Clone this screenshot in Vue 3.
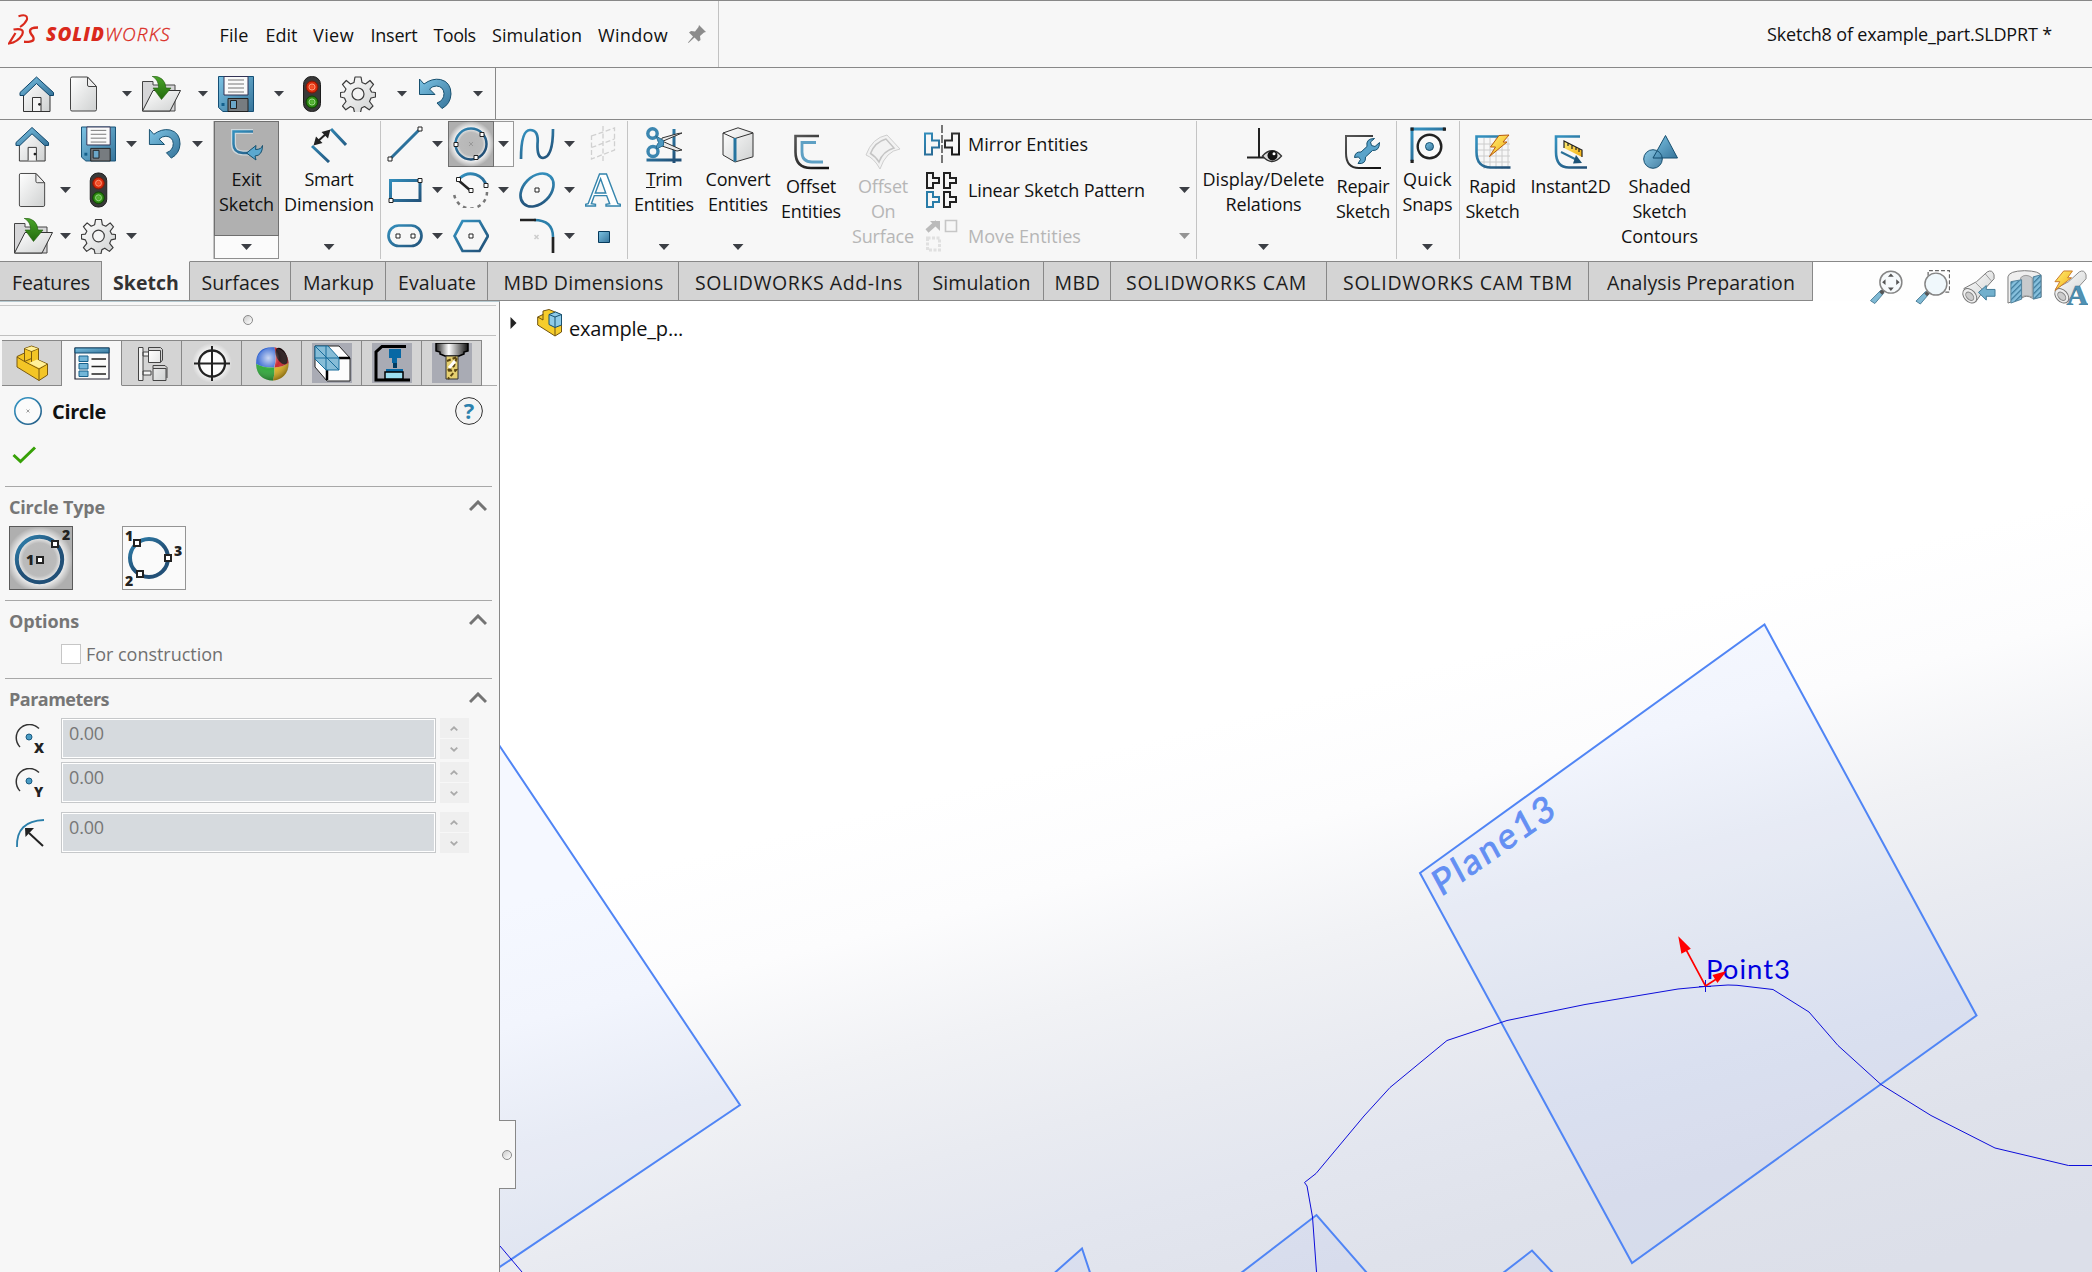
<script setup>
// Tightens or loosens tracking so that a label occupies its design width.
const vFit = {
  mounted(el, { value }) {
    if (!value) return
    const width = el.getBoundingClientRect().width
    el.style.letterSpacing = `${(value - width) / el.textContent.length}px`
  },
}

const menus = [
  ['File', 29, 219.5], ['Edit', 32, 265.5], ['View', 41, 313], ['Insert', 47, 370.5],
  ['Tools', 42, 433.5], ['Simulation', 90, 492], ['Window', 70, 598],
].map(([label, width, x], i, all) => ({
  label, width, gap: i < all.length - 1 ? all[i + 1][2] - x : width,
}))

const quickBar = [
  { icon: 'home', w: 36 }, { icon: 'doc', w: 36 }, { caret: true },
  { icon: 'open', w: 40 }, { caret: true }, { icon: 'save', w: 36 },
  { caret: true }, { icon: 'light', w: 36 }, { icon: 'gear', w: 36 },
  { caret: true }, { icon: 'undo', w: 36 }, { caret: true },
]

const fileGrid = [
  'home', '', 'save', 'v', 'undo', 'v',
  'doc', 'v', 'light', '', '', '',
  'open', 'v', 'gear', 'v', '', '',
]
const sketchGrid = [
  'line', 'v', 'circle', 'v', 'spline', 'v', 'planes',
  'rect', 'v', 'arc', 'v', 'ellipse', 'v', 'text',
  'slot', 'v', 'polygon', '', 'fillet', 'v', 'point',
]

const entityTools = [
  { icon: 'trim', w: 73, lines: [['Trim', 36], ['Entities', 60]], caret: true },
  { icon: 'convert', w: 75, lines: [['Convert', 65], ['Entities', 60]], caret: true },
  { icon: 'offset', w: 71, lines: [['Offset', 50], ['Entities', 60]], low: true },
  { icon: 'surface', w: 73, lines: [['Offset', 50], ['On', 24], ['Surface', 62]], low: true, off: true },
]
const patternTools = [
  { icon: 'mirror', label: 'Mirror Entities', width: 120 },
  { icon: 'pattern', label: 'Linear Sketch Pattern', width: 177, caret: true },
  { icon: 'move', label: 'Move Entities', width: 113, caret: true, off: true },
]
const relationTools = [
  { icon: 'relations', w: 134, lines: [['Display/Delete', 122], ['Relations', 76]], caret: true },
  { icon: 'repair', w: 65, lines: [['Repair', 53], ['Sketch', 54]], low: true },
]
const snapTools = [{ icon: 'snaps', w: 62, lines: [['Quick', 49], ['Snaps', 50]], caret: true }]
const rapidTools = [
  { icon: 'rapid', w: 66, lines: [['Rapid', 47], ['Sketch', 54]], low: true },
  { icon: 'instant', w: 90, lines: [['Instant2D', 80]], low: true },
  { icon: 'shaded', w: 88, lines: [['Shaded', 62], ['Sketch', 54], ['Contours', 77]], low: true },
]
const groups = [entityTools, relationTools, snapTools, rapidTools]

const tabs = [
  ['Features', 102, 78], ['Sketch', 88, 66], ['Surfaces', 101, 78], ['Markup', 95, 71],
  ['Evaluate', 102, 78], ['MBD Dimensions', 191, 160], ['SOLIDWORKS Add-Ins', 240, 208],
  ['Simulation', 125, 98], ['MBD', 67, 46], ['SOLIDWORKS CAM', 216, 181],
  ['SOLIDWORKS CAM TBM', 262, 230], ['Analysis Preparation', 224, 188],
]
const viewTools = ['zoomfit', 'zoomarea', 'prevview', 'section', 'dynview']
const managerTabs = ['feature', 'property', 'config', 'target', 'appearance', 'camfeat', 'cammach', 'camtool']
const params = [{ icon: 'px', axis: 'X' }, { icon: 'py', axis: 'Y' }, { icon: 'pr' }]
</script>

<template>
  <div class="app">
    <svg class="defs" width="0" height="0">
      <defs>
        <linearGradient id="gb" gradientUnits="userSpaceOnUse" x1="6" y1="4" x2="30" y2="34">
          <stop offset="0" stop-color="#338fbd" /><stop offset="1" stop-color="#225077" />
        </linearGradient>
        <linearGradient id="gf" x1="0" y1="0" x2="1" y2="1">
          <stop offset="0" stop-color="#7cc3e4" /><stop offset="1" stop-color="#36749a" />
        </linearGradient>
        <linearGradient id="gk" gradientUnits="userSpaceOnUse" x1="4" y1="2" x2="30" y2="34">
          <stop offset="0" stop-color="#555" /><stop offset="1" stop-color="#151515" />
        </linearGradient>
        <linearGradient id="gw" x1="0" y1="0" x2="1" y2="1">
          <stop offset="0" stop-color="#fff" /><stop offset="1" stop-color="#cfd1d1" />
        </linearGradient>
        <linearGradient id="gg" x1="0" y1="0" x2="0" y2="1">
          <stop offset="0" stop-color="#4aa52a" /><stop offset="1" stop-color="#226a0b" />
        </linearGradient>
        <linearGradient id="gy" x1="0" y1="0" x2="1" y2="1">
          <stop offset="0" stop-color="#ffee77" /><stop offset="1" stop-color="#f2ae10" />
        </linearGradient>
        <linearGradient id="gt" x1="0" y1="0" x2="1" y2="0">
          <stop offset="0" stop-color="#222" /><stop offset=".4" stop-color="#fff" /><stop offset="1" stop-color="#111" />
        </linearGradient>
        <radialGradient id="gr"><stop offset="0" stop-color="#ff5a30" /><stop offset="1" stop-color="#c91b00" /></radialGradient>
        <radialGradient id="gn"><stop offset="0" stop-color="#5fc03c" /><stop offset="1" stop-color="#1d7405" /></radialGradient>
        <radialGradient id="ball" cx=".38" cy=".32" r=".75"><stop offset="0" stop-color="#fff" stop-opacity=".75" /><stop offset=".45" stop-color="#fff" stop-opacity=".1" /><stop offset="1" stop-color="#000" stop-opacity=".45" /></radialGradient>
        <radialGradient id="glow"><stop offset="0" stop-color="#fff" stop-opacity=".1" /><stop offset=".5" stop-color="#fff" stop-opacity=".15" /><stop offset=".7" stop-color="#fff" stop-opacity=".9" /><stop offset="1" stop-color="#fff" stop-opacity="0" /></radialGradient>
        <radialGradient id="halo"><stop offset="0" stop-color="#fff" /><stop offset=".6" stop-color="#fff" stop-opacity=".9" /><stop offset="1" stop-color="#fff" stop-opacity="0" /></radialGradient>
        <pattern id="hatch" width="4" height="4" patternUnits="userSpaceOnUse" patternTransform="rotate(-45)">
          <rect width="4" height="4" fill="#86c0dd" /><rect width="4" height="1.3" fill="#3a789a" />
        </pattern>
      </defs>

      <symbol id="i-home" viewBox="0 0 36 36">
        <path d="M4.5 17 17.5 4 31 17v18.5H4.500z" fill="url(#gw)" stroke="#333" />
        <path d="M13.5 35V21.5h8.500V35" fill="#f4f4f4" stroke="#333" /><circle cx="20.500" cy="28.300" r="1.400" fill="#222" />
        <path d="M1 16.500 17.500 1 34.500 16.500v3h-4L17.500 7.500 5 19.500H1z" fill="url(#gf)" stroke="#0e4469" />
      </symbol>
      <symbol id="i-doc" viewBox="0 0 36 36">
        <path d="M4.500 2.500q0-1.500 1.500-1.500h15.500l9 9.500v23q0 1.500-1.500 1.500H6q-1.500 0-1.500-1.500z" fill="url(#gw)" stroke="#444" />
        <path d="M21.500 1v8q0 1.500 1.500 1.500h7.500z" fill="#eee" stroke="#444" />
      </symbol>
      <symbol id="i-open" viewBox="0 0 40 36">
        <path d="M1.500 35V5.500H12v3.500h22v26z" fill="#d6d6d8" stroke="#444" />
        <path d="M1.500 35 12 14.500h27.500L29 35z" fill="url(#gw)" stroke="#333" />
        <path d="M11 0q13 0 14 12h5L20.500 23.500 12 12h5.500Q18 4 11 0z" fill="url(#gg)" stroke="#245c10" stroke-width=".6" />
      </symbol>
      <symbol id="i-save" viewBox="0 0 36 36">
        <path d="M.5.500h35v35H5l-4.500-4z" fill="url(#gf)" stroke="#154f75" />
        <path d="M6 .5h24V19H6z" fill="#fafafa" stroke="#335" /><path d="M10 4h16M10 8h16M10 12h16M10 16h16" stroke="#777" />
        <path d="M10 22.500h20v13H10z" fill="#777c80" stroke="#222" /><path d="M12.500 24.500h6v8h-6z" fill="#6ba7c9" stroke="#222" />
        <path d="M3.500 27h3v3h-3z" fill="#14608c" />
      </symbol>
      <symbol id="i-light" viewBox="0 0 36 36">
        <rect x="9.500" y=".5" width="17" height="35" rx="8" fill="#393939" stroke="#1c1c1c" />
        <circle cx="18" cy="11" r="6" fill="url(#gr)" stroke="#7b1a08" /><circle cx="18" cy="26" r="6" fill="url(#gn)" stroke="#0d4403" />
        <circle cx="18" cy="11" r="3" fill="none" stroke="#ff9a7a" /><circle cx="18" cy="26" r="3" fill="none" stroke="#9ad888" />
      </symbol>
      <symbol id="i-gear" viewBox="0 0 36 36">
        <path d="M15 1h6l1 5.500 3.500 1.500 4.500-3.500 3.500 4-3.500 4.500 1.500 3 4 .5v4.500l-4.500 1-1.500 3.500 3.500 4.500-3.800 3.800-4.700-3.300-3 1.500-1 4.500h-6l-1-4.500-3-1.500-4.700 3.300L2.500 30l3.500-4.500-1.500-3.500L.5 21v-4.500l4-.5L6 13 2.500 8.500l3.800-4L10.500 8 14 6.500z" fill="url(#gw)" stroke="#3b3b3b" stroke-width="1.200" stroke-linejoin="round" />
        <circle cx="18" cy="18" r="6" fill="#f4f4f4" stroke="#3b3b3b" stroke-width="1.200" />
      </symbol>
      <symbol id="i-undo" viewBox="0 0 36 36">
        <path d="M2.500 3l4.500 5Q15 2 23.500 3.500 34 6 34 18q-.5 10-9 14.500l-5-5.500q7-2.500 7-9.500-.5-7-7.500-7.500-4 0-7 3l5.500 5.500H2.500z" fill="url(#gf)" stroke="#17506f" />
      </symbol>
      <symbol id="i-exit" viewBox="0 0 36 36">
        <path d="M24 4.500H4.500V17Q4.500 25.500 14 26h6" fill="none" stroke="#e4f2f8" stroke-width="5" opacity=".6" />
        <path d="M24 4.500H4.500V17Q4.500 25.500 14 26h5" fill="none" stroke="url(#gb)" stroke-width="2.500" />
        <path d="M17.500 26 27 18.500l-.5 4q6 0 7-4 0 10-7.500 10.500l1 4z" fill="#5ba8cf" stroke="#15506f" />
      </symbol>
      <symbol id="i-dim" viewBox="0 0 36 36">
        <path d="M20 2 35 18M1 19l17 16" stroke="url(#gb)" stroke-width="3" />
        <path d="M5 16 17 5" stroke="#222" stroke-width="2" /><path d="M2.500 18.500 5 9.500l6.500 6.500zM19.500 2.500l-9 2.500 6.500 6.500z" fill="#222" />
      </symbol>
      <symbol id="i-line" viewBox="0 0 36 36">
        <path d="M3 33 33 3" stroke="url(#gb)" stroke-width="3" /><path d="M1 31h4v4H1zM31 1h4v4h-4z" fill="#fff" stroke="#222" />
      </symbol>
      <symbol id="i-circle" viewBox="0 0 46 46">
        <circle cx="23" cy="23" r="23" fill="url(#glow)" />
        <circle cx="23" cy="23" r="15.500" fill="none" stroke="url(#gb)" stroke-width="2.500" />
        <path d="M32 11.500h4v4h-4zM6 21.500h4v4H6zM26 34.500h4v4h-4z" fill="#fff" stroke="#222" /><path d="m21 21 4 4m0-4-4 4" stroke="#999" />
      </symbol>
      <symbol id="i-spline" viewBox="0 0 36 36">
        <path d="M2 33Q2 4 11 4t7.500 14Q18 32 24 32 34 31 34 3" fill="none" stroke="url(#gb)" stroke-width="2.700" />
      </symbol>
      <symbol id="i-planes" viewBox="0 0 36 36">
        <path d="M6.500 10 29.500 2v22l-23 9zM6.500 21.500 29.500 13M18 0v35" fill="none" stroke="#d0d0d0" stroke-width="1.300" stroke-dasharray="5 2.500" />
      </symbol>
      <symbol id="i-rect" viewBox="0 0 36 36">
        <path d="M3.500 8.500h29.500v20H3.500z" fill="none" stroke="url(#gb)" stroke-width="3" /><path d="M31 6.500h4v4h-4zM2 26.500h4v4H2z" fill="#fff" stroke="#222" />
      </symbol>
      <symbol id="i-arc" viewBox="0 0 36 36">
        <path d="M7 6A16 16 0 0 1 33.500 15" fill="none" stroke="url(#gb)" stroke-width="3" />
        <path d="M34 20A16.500 16.500 0 0 1 1 20" fill="none" stroke="#777" stroke-width="2.500" stroke-dasharray="3.500 4" />
        <path d="M5 8 18 19" stroke="#222" stroke-width="2.500" /><path d="M3.500 5.500h4v4h-4zM16 16.500h4v4h-4zM31 11.500h4v4h-4z" fill="#fff" stroke="#222" />
      </symbol>
      <symbol id="i-ellipse" viewBox="0 0 36 36">
        <ellipse cx="18" cy="18" rx="13.500" ry="19" transform="rotate(45 18 18)" fill="none" stroke="url(#gb)" stroke-width="2.700" />
        <path d="M16 16h4v4h-4z" fill="#fff" stroke="#222" />
      </symbol>
      <symbol id="i-slot" viewBox="0 0 36 36">
        <rect x="1.500" y="7.500" width="33" height="20.500" rx="10.200" fill="none" stroke="url(#gb)" stroke-width="2.700" />
        <path d="M9 16h4v4H9zM24 16h4v4h-4z" fill="#fff" stroke="#222" />
      </symbol>
      <symbol id="i-polygon" viewBox="0 0 36 36">
        <path d="M9.500 3h17L35 18l-8.500 15h-17L1.500 18z" fill="none" stroke="url(#gb)" stroke-width="2.700" /><path d="M16 16h4v4h-4z" fill="#fff" stroke="#222" />
      </symbol>
      <symbol id="i-fillet" viewBox="0 0 36 36">
        <path d="M15 2Q34 2 34 19" fill="none" stroke="#2b7faa" stroke-width="2.500" /><path d="M1 2h16M34 19v16" stroke="#222" stroke-width="2.700" />
        <path d="m15.500 17 4 4m0-4-4 4" stroke="#ccc" stroke-width="1.500" />
      </symbol>
      <symbol id="i-point" viewBox="0 0 36 36"><path d="M13.500 13.500h11v11h-11z" fill="url(#gf)" stroke="#063a5c" /></symbol>

      <symbol id="i-trim" viewBox="0 0 38 36">
        <path d="M29 2v35M1.500 33h35" stroke="url(#gb)" stroke-width="3" />
        <path d="M17 14l20 9-5 1-15-5zM16 15 37 6l-4 .5L17 11z" fill="#e8e8e8" stroke="#333" />
        <circle cx="7.500" cy="6.500" r="4.700" fill="#f7f7f7" stroke="#3b86b0" stroke-width="3.400" /><circle cx="8" cy="24.500" r="5" fill="#f7f7f7" stroke="#3b86b0" stroke-width="3.400" />
        <path d="m11 9 7.500 4.500v5l-7 3.500q-1-3 2-6.500z" fill="#4a96bf" stroke="#2a6d92" />
      </symbol>
      <symbol id="i-convert" viewBox="0 0 36 36">
        <path d="M3 6 18 .8l15 5v24L15 35 3 28z" fill="url(#gw)" stroke="#333" /><path d="M3 6l12 5.500L33 6" fill="none" stroke="#333" /><path d="M15 11v23.500" stroke="#26749f" stroke-width="3" />
      </symbol>
      <symbol id="i-offset" viewBox="0 0 36 36">
        <path d="M26 2H2.500v16Q2.500 34 18 34h18" fill="none" stroke="url(#gk)" stroke-width="2.600" /><path d="M23 8.500H9v9.500q0 10 10 10h11" fill="none" stroke="#5ea0c4" stroke-width="2.800" />
      </symbol>
      <symbol id="i-surface" viewBox="0 0 36 36">
        <path d="M1 21Q7 4 22 1l13 14q-14 2-20 20Q9 24 1 21z" fill="#f2f2f2" stroke="#cfcfcf" /><path d="M5.500 19.500Q10 8 21 5l8 9Q18 17 14 28 10 22 5.500 19.500z" fill="none" stroke="#c4c4c4" stroke-width="1.500" />
      </symbol>
      <symbol id="i-mirror" viewBox="0 0 38 38">
        <path d="M2 8.500h7v7h7v7H9v7H2z" fill="none" stroke="url(#gb)" stroke-width="2" /><path d="M36 8.500h-7v7h-7v7h7v7h7z" fill="none" stroke="url(#gk)" stroke-width="2" />
        <path d="M19 0v38" stroke="#222" stroke-width="1.200" stroke-dasharray="8 2" />
      </symbol>
      <symbol id="i-pattern" viewBox="0 0 38 38">
        <path d="M4 2h6v5h6v5h-6v5H4zM21 2h6v5h6v5h-6v5h-6zM21 21h6v5h6v5h-6v5h-6z" fill="none" stroke="#222" stroke-width="2" /><path d="M4 21h6v5h6v5h-6v5H4z" fill="none" stroke="#297ca8" stroke-width="2" />
      </symbol>
      <symbol id="i-move" viewBox="0 0 38 38">
        <path d="m4 14 10-9" stroke="#bbb" stroke-width="4.500" /><path d="M7 4h10v10z" fill="#bbb" /><path d="M22.500 3.500h11v11h-11z" fill="none" stroke="#c6c6c6" stroke-width="1.600" />
        <path d="M4.500 21h12v12h-12z" fill="none" stroke="#e0e0e0" stroke-width="3" stroke-dasharray="3 1.500" />
      </symbol>
      <symbol id="i-relations" viewBox="0 0 36 36">
        <path d="M13 1v29M1 30.500h17" stroke="#222" stroke-width="2" /><path d="M16.500 29q9.500-10.500 19 0-9.500 11-19 0z" fill="#ddd" stroke="#333" stroke-width="1.300" /><circle cx="26.500" cy="28.500" r="5" fill="#111" /><circle cx="28" cy="26.800" r="1.500" fill="#fff" />
      </symbol>
      <symbol id="i-repair" viewBox="0 0 36 36">
        <path d="M28 2H1v17q0 15 13 15h22" fill="none" stroke="url(#gk)" stroke-width="2" />
        <path d="M34.500 8.500l-4.500 4-3.500-1-1-3.500 4-3.500q-9 0-7.500 8L16 18q-6-.5-6.500 5.500l4-.5 2 2.500-2.500 4q8 1 7.500-6.500l7-6.500q7 .5 7-8z" fill="#59a3ca" stroke="#15506f" />
      </symbol>
      <symbol id="i-snaps" viewBox="0 0 36 36">
        <path d="M2 34V2h33" fill="none" stroke="url(#gb)" stroke-width="3" /><path d="M.5.500h3.200v3.200H.5zM32.800.500H36v3.200h-3.200zM.5 32.800h3.200V36H.5z" fill="#222" />
        <circle cx="19.500" cy="19.500" r="11.800" fill="#fafafa" stroke="#222" stroke-width="2.400" /><circle cx="19.500" cy="19.500" r="4" fill="url(#gf)" stroke="#15506f" />
      </symbol>
      <symbol id="i-rapid" viewBox="0 0 36 36">
        <path d="M9 4v31M15 4v31M21 4v31M27 4v31M33 4v31M2 10h33M2 16h33M2 22h33M2 28h33" stroke="#ccc" /><path d="M26 2.500H1.500V18Q1.500 33.500 16 33.500h19.500" fill="none" stroke="url(#gb)" stroke-width="2.600" />
        <path d="m24 1.500 10-.5-6 7h4L14.500 22.500l6-9.500h-5z" fill="url(#gy)" stroke="#b85a0d" />
      </symbol>
      <symbol id="i-instant" viewBox="0 0 36 36">
        <path d="M27 2.500H3V18Q3 33.500 16 33.500h18" fill="none" stroke="url(#gb)" stroke-width="2.600" />
        <path d="m11 7 18 9v7l-18-9z" fill="url(#gy)" /><path d="M11 14V7l18 9v7M15 9v3M19 11v4M23 13v3M26 15v3" fill="none" stroke="#222" stroke-width="1.200" />
        <path d="m8 18 16 8" stroke="#2a7097" stroke-width="2" /><path d="m23 21 6 8-9 .5z" fill="#1d5377" />
      </symbol>
      <symbol id="i-shaded" viewBox="0 0 36 36">
        <path d="M23.500 1.500 35.500 24H11z" fill="url(#gf)" stroke="#164f70" /><circle cx="11" cy="25" r="9.300" fill="url(#gf)" fill-opacity=".9" stroke="#164f70" /><path d="M15 17 11 24h9.500" fill="none" stroke="#164f70" />
      </symbol>

      <symbol id="i-zoomfit" viewBox="0 0 36 36">
        <path d="m12 21 3 3-9 10.500-4.500-3z" fill="#7fb9d4" stroke="#4c7f99" /><path d="m12 24 4-4" stroke="#555" stroke-width="4" /><circle cx="22.500" cy="12.500" r="11.300" fill="#f7fafc" stroke="#858585" stroke-width="1.500" />
        <path d="m22.500 3.500 3 3.500h-6zM22.500 21.500l3-3.500h-6zM13.500 12.500 17 9.500v6zM31.500 12.500 28 9.500v6z" fill="#555" />
      </symbol>
      <symbol id="i-zoomarea" viewBox="0 0 36 36">
        <path d="M13.500 6V.7h22v22H30" fill="none" stroke="#666" stroke-width="1.300" stroke-dasharray="4 2.200" /><path d="m11 22 3 3-8.500 10L1 32z" fill="#7fb9d4" stroke="#4c7f99" /><path d="m11 25.500 4-4" stroke="#555" stroke-width="4" /><circle cx="21.500" cy="14.500" r="11.300" fill="#f0f8fc" stroke="#858585" stroke-width="1.500" />
      </symbol>
      <symbol id="i-prevview" viewBox="0 0 36 36">
        <path d="M3 19 16 12 27 2q5-3 7 3v4L24 20 15 33z" fill="url(#gw)" stroke="#777" /><path d="m15 13 8 8M25 4l6 7" stroke="#999" /><ellipse cx="9" cy="26.500" rx="6" ry="8.500" transform="rotate(-42 9 26.500)" fill="#eee" stroke="#777" /><ellipse cx="9" cy="27" rx="3.200" ry="5" transform="rotate(-42 9 27)" fill="#ccc" stroke="#888" />
        <path d="m18 23 8-7v4h9v7h-9v4z" fill="#72b0cd" stroke="#3e7896" />
      </symbol>
      <symbol id="i-section" viewBox="0 0 36 36">
        <path d="M1 34V7Q2 1 18 .7 34 1 35 6v22l-9 1q-6-4-11 0z" fill="#efefef" stroke="#777" /><path d="M14 8q5-5 12 0v20q-7-3-11 0z" fill="#c8cacc" stroke="#999" /><path d="M4 12l11-2v20L4 34zM27 7l8-2v23l-8 2z" fill="url(#hatch)" stroke="#52819b" />
      </symbol>
      <symbol id="i-dynview" viewBox="0 0 36 36">
        <path d="M3 19 16 12 27 2q5-3 7 3v4L24 20 15 33z" fill="url(#gw)" stroke="#888" /><ellipse cx="9" cy="26.500" rx="6" ry="8.500" transform="rotate(-42 9 26.500)" fill="#eee" stroke="#777" /><ellipse cx="9" cy="27" rx="3.200" ry="5" transform="rotate(-42 9 27)" fill="#ccc" stroke="#888" />
        <path d="M11 1h9l-5 7h4L2 21l5-9H2z" fill="url(#gy)" stroke="#c8792b" />
      </symbol>

      <symbol id="i-feature" viewBox="0 0 40 40">
        <path d="M5 13.500 12.500 10V5.500L19.500 3l7 2.500v11.500l9 4v11L27 37.500 5 24z" fill="#f3c526" stroke="#7a5a10" /><path d="m12.500 5.500 7 3 7-3M19.500 8.500V19M5 14l7.500 4.500M12.500 10v8.500M12.500 18.500 27 26v11.500M27 26l8.500-5M12.500 18.500l7-3" fill="none" stroke="#7a5a10" /><path d="m13 5.500 6.500-2 6.500 2-6.500 2.500zM17 20l8-3.500 9.500 4.500L27 25z" fill="#fff09a" />
      </symbol>
      <symbol id="i-property" viewBox="0 0 40 40">
        <path d="M3 5h34v31H3z" fill="#fafafa" stroke="#223" stroke-width="1.200" /><path d="M3 5h34v5H3z" fill="url(#gf)" stroke="#134d70" /><path d="M7 13h9v5.500H7zM7 20.500h9V26H7zM7 28h9v5.500H7z" fill="#73b6d8" stroke="#17618b" /><path d="M19.500 16H34M19.500 23.500H34M19.500 31H34" stroke="#222" stroke-width="1.500" />
      </symbol>
      <symbol id="i-config" viewBox="0 0 40 40">
        <path d="M6.500 4.500H11v33H6.500zM11 9h6v4h-6zM11 28h8v4h-8z" fill="#f2f2f2" stroke="#444" /><path d="M16.500 7.500v-3h12l2 2V17l-2 2.500M21 25.500v-3h12l2 2V35" fill="none" stroke="#444" /><path d="M16.500 7.500h12v12h-12zM21 25.500h13v12H21z" fill="url(#gw)" stroke="#444" />
      </symbol>
      <symbol id="i-target" viewBox="0 0 40 40">
        <circle cx="20" cy="20" r="20" fill="url(#halo)" /><circle cx="20" cy="20.500" r="13" fill="none" stroke="#222" stroke-width="2.300" /><path d="M20 3v35M2 20.500h36" stroke="#222" stroke-width="2" />
      </symbol>
      <symbol id="i-appearance" viewBox="0 0 40 40">
        <path d="M22.500 4.300Q4 3 4 21q8 4 18 3.500 3-9 .5-20.200z" fill="#2f62d0" /><path d="M4 21q8 4 18.500 3.500.5 7-1.500 13Q5 37 4 21z" fill="#1fa32b" /><path d="M22.500 24.500Q31 24 36.500 20 36 36 21 37.500q2-6 1.500-13z" fill="#dfae10" /><path d="M22.500 4.300Q36 8 36.500 20q-6 4-14 4.500 2.500-10 0-20.200z" fill="#c4151e" /><ellipse cx="29.500" cy="13" rx="5" ry="9" transform="rotate(-28 29.500 13)" fill="#150507" /><circle cx="20.300" cy="21" r="16.500" fill="url(#ball)" />
      </symbol>
      <symbol id="i-camfeat" viewBox="0 0 40 40">
        <path d="M0 0h40v40H0z" fill="#a9abb4" /><path d="M3 3h24l11 12v23H15L3 24z" fill="#fdfdfd" stroke="#222" /><path d="M27 15h11M15 27v10" stroke="#000" stroke-width="2.500" /><path d="M3 3h13l11 12v12H14L3 16z" fill="#86bdd7" stroke="#176d9b" /><path d="m3 3 24 24M14 3v24M3 15h24" stroke="#176d9b" />
      </symbol>
      <symbol id="i-cammach" viewBox="0 0 40 40">
        <path d="M0 0h40v40H0z" fill="#a9abb4" /><path d="M34 3.500H10L4 9v28h34" fill="none" stroke="#000" stroke-width="3" /><path d="M17 6h12v9h-4v5h-5v-5h-3zM14 26h17v3H14z" fill="#0868a4" /><path d="M21 20h4v5h-4z" fill="#013c62" /><path d="M13 29h18v7H13z" fill="#9ddff2" stroke="#000" stroke-width="1.500" />
      </symbol>
      <symbol id="i-camtool" viewBox="0 0 40 40">
        <path d="M0 0h40v40H0z" fill="#a9abb4" /><path d="M4 0h32v8l-4 1v2l-5 2H13l-5-2V9L4 8z" fill="url(#gt)" stroke="#000" stroke-width="1.500" /><path d="M14 13h12v23H14z" fill="#e5cf70" stroke="#333" /><path d="m15 18 10-4-3 9-7 5 9-1-8 9" fill="none" stroke="#5a4511" stroke-width="2" stroke-dasharray="4 2" /><path d="m17 25 6-7" stroke="#fff" stroke-width="3" />
      </symbol>

      <symbol id="i-px" viewBox="0 0 30 30"><path d="M24 4.500A13 13 0 0 0 5 23" fill="none" stroke="#333" stroke-width="1.500" /><circle cx="14" cy="13" r="3" fill="#4a9cc4" stroke="#1a5a80" /></symbol>
      <symbol id="i-py" viewBox="0 0 30 30"><path d="M24 4.500A13 13 0 0 0 5 23" fill="none" stroke="#333" stroke-width="1.500" /><circle cx="14" cy="13" r="3" fill="#4a9cc4" stroke="#1a5a80" /></symbol>
      <symbol id="i-pr" viewBox="0 0 30 30"><path d="M2 29Q1 3 29 2" fill="none" stroke="#2b7faa" stroke-width="1.800" /><path d="M28 28 14 15" stroke="#222" stroke-width="2" /><path d="M10 10h9l-8.500 9z" fill="#222" /></symbol>
      <symbol id="i-chev" viewBox="0 0 18 12"><path d="m1 10 8-8 8 8" fill="none" stroke="#747474" stroke-width="3" /></symbol>
    </svg>

    <header class="titlebar">
      <div class="brandmenu">
        <svg class="ds" width="32" height="31" viewBox="0 0 32 31" fill="none" stroke="#da291c">
          <path d="M10.500 2.200Q20-.5 19 5.500 17 10 12 13" stroke-width="2" />
          <path d="M5.500 15.500q12-2 8.500 5.500Q10 28 1 29.500L7.500 19" stroke-width="2.200" />
          <path d="M30 13.500q-8 0-8 3.500 0 2 3 5.500 2 4-2 4.800-3 .7-7 .5" stroke-width="2.400" />
        </svg>
        <span class="logo"><b v-fit="59">SOLID</b><i v-fit="66">WORKS</i></span>
        <nav class="menus">
          <span v-for="m in menus" :key="m.label" class="menu" :style="{ width: m.gap + 'px' }"><span v-fit="m.width">{{ m.label }}</span></span>
        </nav>
        <svg class="pin" width="20" height="20" viewBox="0 0 20 20"><path d="m12 1 7 7-2 .5-4 3.500.500 4-2 1.500-4-4L1.500 19 1 18.500l5-6-4-4 2-1.500 4 .5 3.500-4.500z" fill="#8c8c8c" /></svg>
      </div>
      <div class="doctitle"><span v-fit="285">Sketch8 of example_part.SLDPRT *</span></div>
    </header>

    <div class="quick">
      <div class="quickbar">
        <i class="grip" />
        <div v-for="(q, i) in quickBar" :key="i" :class="['q', 'q' + i]">
          <i v-if="q.caret" class="caret" />
          <svg v-else :width="q.w" height="36"><use :href="'#i-' + q.icon" /></svg>
        </div>
      </div>
    </div>

    <div class="ribbon">
      <div class="filegrid">
        <div v-for="(c, i) in fileGrid" :key="i" class="cell">
          <i v-if="c === 'v'" class="caret" />
          <svg v-else-if="c" :width="c === 'open' ? 40 : 35" height="36"><use :href="'#i-' + c" /></svg>
        </div>
      </div>
      <div class="sep" />
      <div class="exit">
        <div class="exitmain">
          <svg width="36" height="36"><use href="#i-exit" /></svg>
          <span class="lb"><span v-fit="30">Exit</span></span><span class="lb"><span v-fit="55">Sketch</span></span>
        </div>
        <div class="exitdrop"><i class="caret" /></div>
      </div>
      <div class="tool smart">
        <svg width="36" height="36"><use href="#i-dim" /></svg>
        <span class="lb"><span v-fit="49">Smart</span></span><span class="lb"><span v-fit="90">Dimension</span></span>
        <i class="caret" />
      </div>
      <div class="sep" />
      <div class="sketchgrid">
        <div v-for="(c, i) in sketchGrid" :key="i" :class="['cell', { on: i === 2, ondrop: i === 3 }]">
          <i v-if="c === 'v'" class="caret" />
          <svg v-else-if="c === 'text'" width="36" height="36"><text x="18" y="34" text-anchor="middle" class="glyph">A</text></svg>
          <svg v-else-if="c" :width="c === 'circle' ? 46 : 36" :height="c === 'circle' ? 46 : 36"><use :href="'#i-' + c" /></svg>
        </div>
      </div>
      <template v-for="(g, gi) in groups" :key="gi">
        <div class="sep" />
        <div v-for="t in g" :key="t.icon" :class="['tool', { low: t.low, off: t.off }]" :style="{ width: t.w + 'px' }">
          <svg width="38" height="36"><use :href="'#i-' + t.icon" /></svg>
          <span v-for="l in t.lines" :key="l[0]" class="lb"><span v-fit="l[1]" :class="{ key: l[0] === 'Trim' }">{{ l[0] }}</span></span>
          <i v-if="t.caret" class="caret" />
        </div>
        <div v-if="gi === 0" class="patterns">
          <div v-for="p in patternTools" :key="p.icon" :class="['prow', { off: p.off }]">
            <svg width="38" height="38"><use :href="'#i-' + p.icon" /></svg>
            <span class="plabel"><span v-fit="p.width">{{ p.label }}</span></span>
            <i v-if="p.caret" class="caret" />
          </div>
        </div>
      </template>
    </div>

    <div class="tabrow">
      <div v-for="t in tabs" :key="t[0]" :class="['tab', { active: t[0] === 'Sketch', cam: t[0] === 'SOLIDWORKS CAM' }]" :style="{ width: t[1] + 'px' }"><span v-fit="t[2]">{{ t[0] }}</span></div>
      <div class="viewbar">
        <svg v-for="v in viewTools" :key="v" width="35" height="35" viewBox="0 0 36 36">
          <use :href="'#i-' + v" width="36" height="36" />
          <text v-if="v === 'dynview'" x="25" y="35.500" text-anchor="middle" class="glyph solid">A</text>
        </svg>
      </div>
    </div>

    <main class="body">
      <aside class="panel">
        <div class="handle"><i class="dot" /></div>
        <div class="mtabs">
          <div v-for="(m, i) in managerTabs" :key="m" :class="['mtab', { active: i === 1 }]"><svg width="40" height="40"><use :href="'#i-' + m" /></svg></div>
          <div class="mfill" />
        </div>
        <div class="ptitle">
          <svg width="28" height="28" viewBox="0 0 28 28"><circle cx="14" cy="14" r="13.200" fill="#fbfbfb" stroke="url(#gb)" stroke-width="1.600" /><path d="m12.500 12.500 3 3m0-3-3 3" stroke="#888" stroke-width=".8" /></svg>
          <b v-fit="54">Circle</b>
          <svg class="help" width="28" height="28" viewBox="0 0 28 28"><circle cx="14" cy="14" r="13.400" fill="#f4f4f4" stroke="#333" /><text x="14" y="22" text-anchor="middle" font-family="Open Sans, sans-serif" font-weight="700" font-size="22" fill="#2c81ad">?</text></svg>
        </div>
        <div class="ok"><svg width="25" height="18" viewBox="0 0 25 18"><path d="m1.500 9 7 6.500L23 1.500" fill="none" stroke="#37a107" stroke-width="3" /></svg></div>

        <section class="sec types">
          <h3><span v-fit="96">Circle Type</span><svg width="18" height="12"><use href="#i-chev" /></svg></h3>
          <div class="typebtns">
            <svg class="tb sel" width="64" height="64" viewBox="1 1 62 62">
              <circle cx="30.500" cy="33.500" r="33" fill="url(#glow)" /><circle cx="30.500" cy="33.500" r="22.700" fill="none" stroke="url(#gb)" stroke-width="4" />
              <path d="M43 15h6v6h-6zM28 31h6v6h-6z" fill="#fff" stroke="#222" stroke-width="2" />
              <text x="53" y="14" class="n">2</text><text x="17" y="39" class="n">1</text>
            </svg>
            <svg class="tb" width="64" height="64" viewBox="1 1 62 62">
              <circle cx="27" cy="32" r="19" fill="none" stroke="url(#gb)" stroke-width="4" />
              <path d="M12 14h6v6h-6zM43 29h6v6h-6zM15 45h6v6h-6z" fill="#fff" stroke="#222" stroke-width="2" />
              <text x="3" y="15" class="n">1</text><text x="3" y="60" class="n">2</text><text x="52" y="30" class="n">3</text>
            </svg>
          </div>
        </section>
        <section class="sec options">
          <h3><span v-fit="70">Options</span><svg width="18" height="12"><use href="#i-chev" /></svg></h3>
          <div class="check"><i class="box" /><span v-fit="137">For construction</span></div>
        </section>
        <section class="sec parameters">
          <h3><span v-fit="100">Parameters</span><svg width="18" height="12"><use href="#i-chev" /></svg></h3>
          <div v-for="p in params" :key="p.icon" :class="['param', p.icon]">
            <svg width="30" height="30"><use :href="'#i-' + p.icon" /><text v-if="p.axis" x="19" y="28.500" class="n">{{ p.axis }}</text></svg>
            <div class="field"><span v-fit="35">0.00</span></div>
            <div class="spin">
              <span><svg width="8" height="5" viewBox="0 0 8 5"><path d="m.7 4.300 3.300-3 3.300 3" fill="none" stroke="#aaa" stroke-width="1.800" /></svg></span>
              <span><svg width="8" height="5" viewBox="0 0 8 5"><path d="m.7.700 3.300 3 3.300-3" fill="none" stroke="#aaa" stroke-width="1.800" /></svg></span>
            </div>
          </div>
        </section>
      </aside>

      <div class="view">
        <svg class="scene" width="1592" height="971" viewBox="500 301 1592 971">
          <defs>
            <linearGradient id="bg" gradientUnits="userSpaceOnUse" x1="250" y1="970" x2="425" y2="1649">
              <stop offset="0" stop-color="#fff" /><stop offset=".17" stop-color="#fcfcfd" /><stop offset=".34" stop-color="#f1f2f5" />
              <stop offset=".5" stop-color="#e9ebf1" /><stop offset=".64" stop-color="#e3e6ef" /><stop offset=".8" stop-color="#dfe2eb" /><stop offset="1" stop-color="#dcdfe9" />
            </linearGradient>
          </defs>
          <rect x="500" y="301" width="1592" height="971" fill="url(#bg)" />
          <g fill="#6494ff" fill-opacity=".065" stroke="#5085f5" stroke-width="2">
            <path d="M499 745 740 1105 499 1267.500z" />
            <path d="M1420 873 1764.500 624.500 1976.500 1015.500 1632 1263z" />
            <path d="M1055 1272.500 1082 1248.500 1090 1272.500M1241 1273 1316.500 1215 1367 1273M1503 1273 1532 1250.500 1553 1273" />
          </g>
          <g fill="none" stroke="#0d0dda" stroke-width="1">
            <path d="m500 1246 22 26" />
            <path d="M1316.500 1272 1312.500 1217 1307 1186 1304.500 1182.500 1316 1173.500 1364 1116 1390 1087.500 1447 1040.500 1507 1020.500 1585 1004.500 1678 989 1705 986.500 1728 985 1737 985.300 1773 989.500 1809 1012 1838 1045.500 1881 1084.500 1931 1115.500 1995 1148 2068.500 1165.500H2092" />
            <path d="M1705.500 980v12M1699 986.500h12" />
          </g>
          <text x="1706" y="979" textLength="84" font-size="27.500" fill="#0000e0">Point3</text>
          <g stroke="#f00" stroke-width="1.600" fill="#f00">
            <path d="m1705.500 986-23-43M1705.500 986l14-9" />
            <path d="m1679.500 938.500 10 10-7.500 4zM1724.500 972.500l-7 9-3.800-6z" />
          </g>
          <text transform="matrix(.818 -.575 .475 .88 1441 897)" textLength="142" font-size="35" stroke-width=".9" stroke="#648ff3" fill="#648ff3">Plane13</text>
        </svg>
        <div class="tree">
          <svg width="7" height="12" viewBox="0 0 7 12"><path d="M.5 0 6.500 6 .5 12z" fill="#222" /></svg>
          <svg class="part" width="26" height="28" viewBox="0 0 26 28">
            <path d="M.7 8 6 5.500V2l6-1.500L18 3l6.500 3v17L18 27 .7 16z" fill="#f6cd2b" stroke="#705310" /><path d="M.7 8 6 11V5M18 17v10" fill="none" stroke="#705310" />
            <path d="M12 5.500 18.500 3l6 2.500v10.500L18 18.500 12 15.500z" fill="#8fcbe8" stroke="#17506f" /><path d="m12 5.500 6 2.500 6.500-2.500M18 8v10" fill="none" stroke="#17506f" />
          </svg>
          <span v-fit="114">example_p...</span>
        </div>
        <div class="flyout"><i class="dot small" /></div>
      </div>
    </main>
  </div>
</template>

<style>
html, body { margin: 0; background: #f7f7f7; overflow: hidden; }
</style>

<style scoped>
.app { width: 2092px; height: 1272px; overflow: hidden; display: flex; flex-direction: column; background: #f7f7f7; font-family: "Segoe UI", "Open Sans", "Noto Sans", sans-serif; font-size: 18px; color: #111; white-space: nowrap; }
.app * { box-sizing: border-box; }
.defs { position: absolute; }
svg { display: block; flex: none; }

.titlebar { height: 68px; flex: none; display: flex; justify-content: space-between; border-top: 1px solid #888; border-bottom: 1px solid #888; }
.brandmenu { width: 719px; height: 66px; display: flex; align-items: flex-start; border-right: 1px solid #c2c2c2; }
.ds { margin: 13px 0 0 8px; }
.logo { margin: 20px 0 0 6px; width: 173.500px; font-size: 19px; line-height: 27px; color: #da291c; display: flex; }
.logo b { font-weight: 800; font-style: italic; }
.logo i { font-weight: 300; font-style: italic; -webkit-text-stroke: .3px #da291c; }
.menus { display: flex; margin-top: 22px; line-height: 25px; }
.menu { display: block; }
.pin { margin: 23px 0 0 19px; }
.doctitle { margin: 21px 40px 0 0; line-height: 25px; }

.quick { height: 52px; flex: none; border-bottom: 1px solid #888; }
.quickbar { width: 496px; height: 51px; border-right: 1px solid #888; display: flex; align-items: center; padding-left: 3px; }
.grip { width: 2px; height: 46px; background: repeating-linear-gradient(#8a8a8a 0 2px, transparent 2px 4px); }
.q { display: flex; justify-content: center; width: 36px; flex: none; }
.q0 { margin-left: 15.500px; } .q1 { margin-left: 11px; } .q2 { margin-left: 7.500px; } .q3 { margin-left: -4px; width: 40px; }
.q4 { margin-left: 4px; } .q5 { margin-left: -3.500px; } .q6 { margin-left: 7.500px; } .q7 { margin-left: -3px; }
.q8 { margin-left: 10px; } .q9 { margin-left: 8px; } .q10 { margin-left: -3px; } .q11 { margin-left: 7px; }
.caret { display: block; flex: none; width: 11px; height: 6px; background: #3c3f45; clip-path: polygon(0 0, 100% 0, 50% 100%); }

.ribbon { height: 141px; flex: none; padding-top: 1px; display: flex; align-items: flex-start; }
.sep { width: 1px; height: 138px; background: #c4c4c4; flex: none; }
.filegrid { width: 213px; padding-left: 16px; display: grid; grid-template-columns: repeat(6, 33px); grid-auto-rows: 46px; }
.cell { display: flex; align-items: center; justify-content: center; }
.sketchgrid { width: 246px; padding-left: 7px; display: grid; grid-template-columns: repeat(7, 33px); grid-auto-rows: 46px; }
.cell.on { width: 46px; margin-left: -6px; background: #afafaf; border: 1px solid #6f6f6f; }
.cell.ondrop { width: 20px; margin-left: 7px; background: #fafafa; border: 1px solid #999; border-left: 0; }
.glyph { font: 700 49px "Liberation Serif", serif; fill: #fff; stroke: #3585ad; stroke-width: 1.4; }
.glyph.solid { font-size: 31px; fill: #4f92b5; stroke: #3a7797; stroke-width: .6; }
.exit { width: 65px; height: 138px; display: flex; flex-direction: column; }
.exitmain { height: 115px; background: #b0b0b0; border: 1px solid #6f6f6f; display: flex; flex-direction: column; align-items: center; padding-top: 5px; }
.exitdrop { height: 23px; border: 1px solid #8f8f8f; border-top: 0; background: #fbfbfb; display: flex; justify-content: center; align-items: center; }
.exitmain svg, .tool svg { margin-bottom: 3.500px; }
.tool { height: 138px; padding: 6px 1px 9px 0; display: flex; flex-direction: column; align-items: center; flex: none; }
.tool.low { padding-top: 13px; }
.smart { width: 101px; }
.lb { display: block; line-height: 25px; height: 25px; }
.tool .caret { margin-top: auto; }
.off { color: #b6b6b6; }
.key::first-letter { text-decoration: underline; }
.key { display: inline-block; }
.patterns { width: 276px; flex: none; padding-left: 3px; }
.prow { height: 46px; display: flex; align-items: center; }
.plabel { width: 211px; margin-left: 7px; }
.off .caret { background: #949494; }

.tabrow { height: 40px; flex: none; display: flex; }
.tab { flex: none; background: #d4d4d4; border: 1px solid #888; border-left: 0; display: flex; align-items: center; justify-content: center; font-size: 19.500px; color: #1c1c1c; padding-top: 2px; padding-left: 1px; }
.tab.cam { padding: 2px 4px 0 0; }
.tab.active { background: #f7f7f7; border-top-color: transparent; border-bottom-color: #888; font-weight: 700; color: #333; }
.viewbar { flex: 1; background: #fefefe; border-top: 1px solid #888; display: flex; gap: 11px; padding: 8px 0 0 56px; position: relative; z-index: 1; height: 40px; }

.body { flex: 1; min-height: 0; display: flex; }
.panel { width: 500px; flex: none; border-right: 1px solid #888; border-top: 1px solid #b5c9d0; padding-top: 3px; }
.handle { width: 496px; height: 31px; border-top: 1px solid #c8c8c8; border-bottom: 1px solid #c0c0c0; display: flex; align-items: center; justify-content: center; padding-bottom: 1px; }
.dot { width: 10px; height: 10px; border-radius: 50%; border: 1px solid #8a8a8a; background: linear-gradient(135deg, #ccc, #fff); }
.mtabs { display: flex; margin: 4px 0 0 2px; height: 46px; }
.mtab { width: 60px; background: #d4d4d4; border: 1px solid #888; border-left: 0; display: flex; align-items: center; justify-content: center; }
.mtab svg { margin-bottom: 1px; }
.mtab.active { background: #f7f7f7; border-bottom-color: transparent; }
.mfill { width: 15px; border-bottom: 1px solid #aaa; }
.ptitle { display: flex; height: 28px; margin: 11px 16px 0 14px; align-items: center; }
.ptitle b { font-size: 20px; margin-left: 10px; padding-top: 1px; }
.help { margin-left: auto; }
.ok { padding: 21px 0 0 12px; height: 61px; }
.sec { margin: 0 7px 0 5px; border-top: 1px solid #a8a8a8; }
.sec h3 { margin: 0; padding: 0 5px 2px 4px; height: 39px; display: flex; align-items: center; justify-content: space-between; font-size: 18px; color: #767676; font-weight: 700; }
.sec h3 span { padding-top: 3px; }
.types { height: 114px; }
.typebtns { display: flex; gap: 49px; padding-left: 4px; }
.tb { border: 1px solid #949494; background: #fafafa; }
.tb.sel { background: #afafaf; border: 1px solid #5a5a5a; }
.n { font-size: 14px; font-weight: 800; fill: #222; font-family: "Open Sans", sans-serif; }
.options { height: 78px; }
.check { display: flex; align-items: center; padding-left: 56px; margin-top: 4px; height: 20px; color: #707070; }
.box { width: 20px; height: 20px; border: 1px solid #c6c6c6; background: #fff; margin-right: 5px; }
.check span { margin-top: -1px; }
.param { display: flex; height: 41px; margin-bottom: 3px; padding-left: 10px; }
.param > svg { margin-top: 6px; }
.param.py { margin-bottom: 9px; }
.field { width: 375px; height: 41px; margin-left: 16px; border: 1px solid #c6c8ca; box-shadow: inset 0 0 0 1px #fff; background: #d6dade; color: #777; padding: 2px 7px; line-height: 25px; }
.spin { margin-left: 4px; width: 29px; display: flex; flex-direction: column; gap: 1px; }
.spin span { flex: 1; background: #efefef; display: flex; align-items: center; justify-content: center; padding-right: 2px; }

.view { position: relative; flex: 1; }
.scene text { font-family: Lato, sans-serif; }
.tree { position: absolute; left: 10px; top: 8px; height: 28px; display: flex; align-items: center; font-size: 20px; }
.tree .part { margin-left: 20px; margin-right: 6px; }
.tree span { padding-top: 11px; }
.flyout { position: absolute; left: -1px; top: 819px; width: 17px; height: 69px; border: 1px solid #888; border-left: 0; background: #f7f7f7; display: flex; align-items: center; justify-content: center; }
</style>
